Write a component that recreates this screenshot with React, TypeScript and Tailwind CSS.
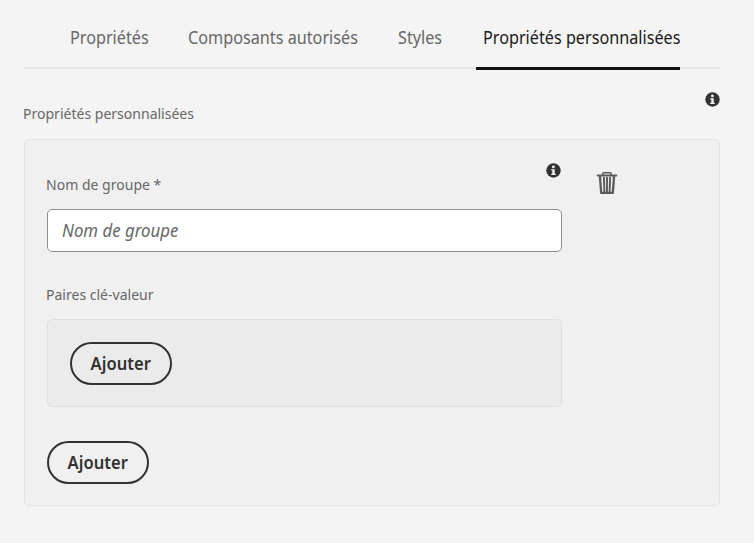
import React from "react";

function InfoIcon() {
  return (
    <svg viewBox="0 0 15 15" className="block size-[15px]">
      <circle cx="7.5" cy="7.5" r="7.2" fill="#323232" />
      <circle cx="7.4" cy="3.9" r="1.4" fill="#f5f5f5" />
      <path d="M5.2 6.2h3.5v4.5h1v1.4H5.2v-1.4h1.1V7.6H5.2z" fill="#f5f5f5" />
    </svg>
  );
}

function TrashIcon() {
  return (
    <svg viewBox="0 0 22 24" className="block h-6 w-[22px]" fill="none" stroke="#5a5a5a">
      <path d="M6.8 4V2.6q0-.9.9-.9h6.6q.9 0 .9.9V4" strokeWidth="1.5" />
      <path d="M1.6 4.5h18.8" strokeWidth="1.8" strokeLinecap="round" />
      <path d="M3.9 5.2l1.3 16.6h11.6l1.3-16.6" strokeWidth="2.3" strokeLinejoin="round" />
      <path d="M7.9 6l.5 15M11 6v15M14.1 6l-.5 15" strokeWidth="1.9" />
    </svg>
  );
}

function Tab({ label }: { label: string }) {
  return (
    <div className="flex h-[75px] items-center whitespace-nowrap text-[18px]">
      <span className="origin-left scale-x-[0.9]">{label}</span>
    </div>
  );
}

function FieldLabel({ text }: { text: string }) {
  return (
    <span className="-ml-px origin-left scale-x-[0.935] whitespace-nowrap text-[15px] leading-[22px]">{text}</span>
  );
}

function AddButton() {
  return (
    <button className="flex h-[43px] w-[102px] items-center justify-center rounded-full border-2 border-[#323232] text-[18px] font-semibold text-[#323232]">
      <span className="-ml-px inline-block scale-x-[0.92] pb-px">Ajouter</span>
    </button>
  );
}

export default function App() {
  return (
    <div className="h-[543px] w-[754px] overflow-hidden bg-[#f4f4f4] pl-[24px] font-['Noto_Sans',sans-serif] text-[#676767]">
      <nav className="flex h-[71px] w-[696px] items-start bg-[linear-gradient(#e4e4e4,#e4e4e4)] bg-[length:100%_2px] bg-[position:0_67px] bg-no-repeat pl-[46px]">
        <div className="w-[118px]"><Tab label="Propriétés" /></div>
        <div className="w-[210px]"><Tab label="Composants autorisés" /></div>
        <div className="w-[78px]"><Tab label="Styles" /></div>
        <div className="h-[71px] w-[204px] bg-[linear-gradient(#111,#111)] bg-[length:100%_3px] bg-[position:0_67px] bg-no-repeat pl-[7px] text-[#1a1a1a]">
          <Tab label="Propriétés personnalisées" />
        </div>
      </nav>
      <div className="flex h-[68px] w-[696px] items-start justify-between">
        <div className="mt-[31px] flex"><FieldLabel text="Propriétés personnalisées" /></div>
        <div className="mt-[21px]"><InfoIcon /></div>
      </div>
      <section className="h-[367px] w-[696px] rounded-[5px] border border-[#e3e3e3] bg-[#f0f0f0] pl-[22px]">
        <div className="flex">
          <div className="w-[515px]">
            <div className="flex h-[69px] items-start justify-between">
              <label className="mt-[33px] flex"><FieldLabel text="Nom de groupe *" /></label>
              <div className="mt-[23px] pr-px"><InfoIcon /></div>
            </div>
            <div className="flex h-[43px] items-center rounded-[5px] border border-[#8e8e8e] bg-white pl-[14px] text-[18px] italic">
              <span className="origin-left scale-x-[0.935] whitespace-nowrap">Nom de groupe</span>
            </div>
          </div>
          <div className="ml-[34px] mt-[31px]"><TrashIcon /></div>
        </div>
        <div className="mt-[31px] flex h-[36px]"><FieldLabel text="Paires clé-valeur" /></div>
        <div className="h-[88px] w-[515px] rounded-[5px] border border-[#e0e0e0] bg-[#ebebeb] pl-[22px] pt-[22px]">
          <AddButton />
        </div>
        <div className="mt-[34px]"><AddButton /></div>
      </section>
    </div>
  );
}
